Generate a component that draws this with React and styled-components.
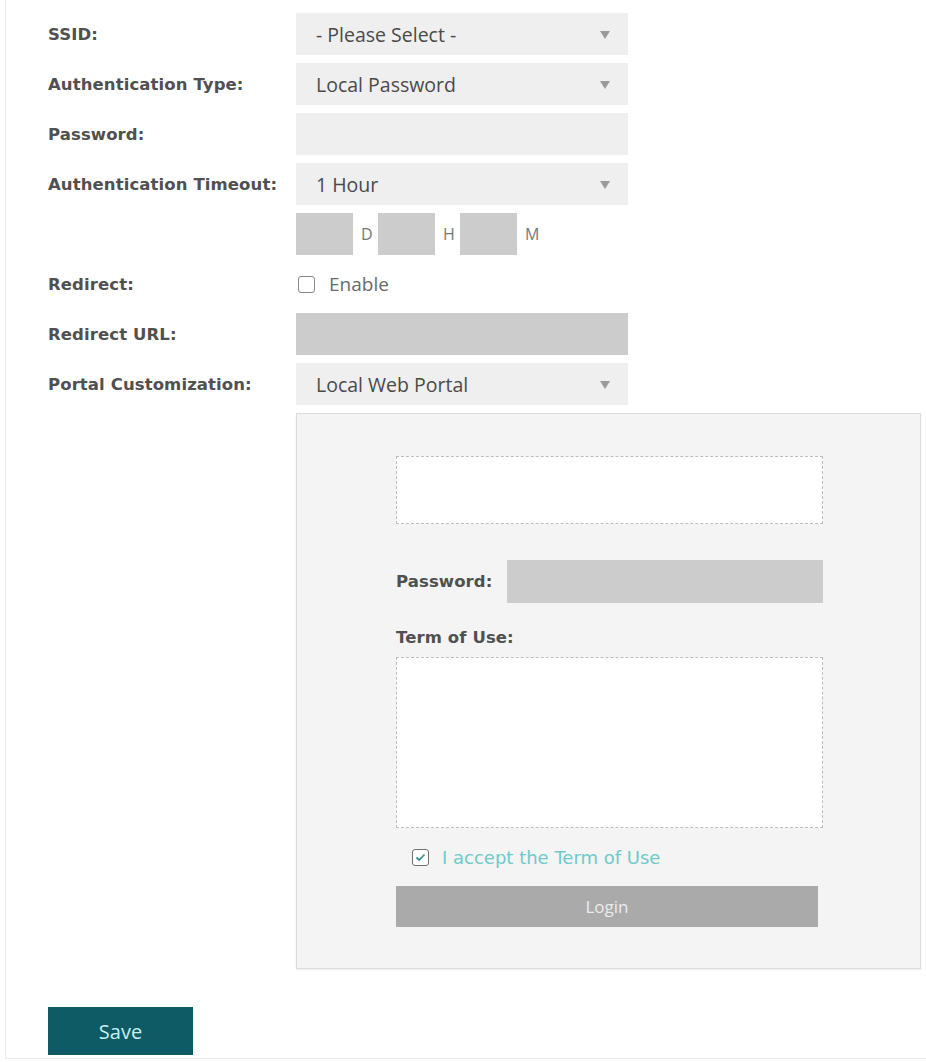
import React from "react";
import styled, { createGlobalStyle } from "styled-components";

const Global = createGlobalStyle`
  html, body { margin: 0; padding: 0; background: #ffffff; }
  body { font-family: "Open Sans", "Noto Sans", sans-serif; }
  * { box-sizing: border-box; }
`;

const Page = styled.div`
  margin-left: 5px;
  width: 921px;
  border-left: 1px solid #ececec;
  border-bottom: 1px solid #ececec;
  padding: 13px 0 3px 42px;
`;

const Form = styled.div`
  display: grid;
  grid-template-columns: 248px 1fr;
  row-gap: 8px;
  align-items: center;
`;

const Label = styled.div`
  font-family: "DejaVu Sans", Verdana, sans-serif;
  font-weight: bold;
  font-size: 16.5px;
  letter-spacing: 0.1px;
  color: #505050;
  white-space: nowrap;
`;

const Field = styled.div`
  width: ${(p) => p.$w || 332}px;
  height: ${(p) => p.$h || 42}px;
  background: ${(p) => (p.$disabled ? "#cccccc" : "#efefef")};
  display: flex;
  align-items: center;
  justify-content: space-between;
  padding: 0 18px 0 20px;
  font-family: "Open Sans", "Noto Sans", sans-serif;
  font-size: 19.5px;
  color: #4a4a4a;
`;

const Arrow = styled.span`
  width: 0;
  height: 0;
  border-left: 5px solid transparent;
  border-right: 5px solid transparent;
  border-top: 8px solid #9a9a9a;
  margin-top: 2px;
`;

const TimeRow = styled.div`
  display: flex;
  align-items: center;
  height: 42px;
`;

const TimeBox = styled.div`
  width: 57px;
  height: 42px;
  background: #cccccc;
`;

const Unit = styled.span`
  width: 25px;
  padding-left: 8px;
  font-family: "Open Sans", sans-serif;
  font-size: 16px;
  color: #777777;
`;

const CheckRow = styled.label`
  display: flex;
  align-items: center;
  height: 42px;
  gap: 14px;
  padding-left: ${(p) => p.$indent || 2}px;
  font-family: "Open Sans", sans-serif;
  font-size: 19px;
  color: #6a6a6a;
`;

const Box = styled.span`
  width: 17px;
  height: 17px;
  border: 1.5px solid ${(p) => (p.$checked ? "#6f6f6f" : "#8a8a8a")};
  border-radius: 3px;
  background: #ffffff;
  display: flex;
  align-items: center;
  justify-content: center;
`;

const Empty = styled.div``;

const Panel = styled.div`
  grid-column: 2;
  width: 625px;
  height: 556px;
  background: #f4f4f4;
  border: 1px solid #dcdcdc;
  box-shadow: 0 1px 2px rgba(0, 0, 0, 0.08);
  padding: 42px 0 0 99px;
  display: flex;
  flex-direction: column;
`;

const Dashed = styled.div`
  width: 427px;
  height: ${(p) => p.$h}px;
  background: #ffffff;
  border: 1.5px dashed #bdbdbd;
`;

const PwRow = styled.div`
  display: flex;
  align-items: center;
  justify-content: space-between;
  width: 427px;
  margin-top: 36px;
`;

const PwInput = styled.div`
  width: 316px;
  height: 43px;
  background: #cccccc;
`;

const TermLabel = styled(Label)`
  margin-top: 24px;
  margin-bottom: 8px;
  line-height: 22px;
`;

const Accept = styled.label`
  display: flex;
  align-items: center;
  gap: 13px;
  margin: 19px 0 0 16px;
  height: 20px;
  font-family: "DejaVu Sans", Verdana, sans-serif;
  font-size: 18px;
  color: #6fcaca;
`;

const LoginButton = styled.div`
  width: 422px;
  height: 41px;
  margin-top: 19px;
  background: #aaaaaa;
  display: flex;
  align-items: center;
  justify-content: center;
  font-family: "Open Sans", sans-serif;
  font-size: 17px;
  color: #ececec;
`;

const SaveButton = styled.button`
  margin-top: 38px;
  width: 145px;
  height: 48px;
  border: none;
  background: #0e5b66;
  color: #c9eef0;
  font-family: "Open Sans", sans-serif;
  font-size: 20px;
  display: block;
  padding: 0;
`;

function Select({ value }) {
  return (
    <Field>
      <span>{value}</span>
      <Arrow />
    </Field>
  );
}

export default function App() {
  return (
    <>
      <Global />
      <Page>
        <Form>
          <Label>SSID:</Label>
          <Select value="- Please Select -" />

          <Label>Authentication Type:</Label>
          <Select value="Local Password" />

          <Label>Password:</Label>
          <Field />

          <Label>Authentication Timeout:</Label>
          <Select value="1 Hour" />

          <Empty />
          <TimeRow>
            <TimeBox />
            <Unit>D</Unit>
            <TimeBox />
            <Unit>H</Unit>
            <TimeBox />
            <Unit>M</Unit>
          </TimeRow>

          <Label>Redirect:</Label>
          <CheckRow>
            <Box />
            Enable
          </CheckRow>

          <Label>Redirect URL:</Label>
          <Field $disabled />

          <Label>Portal Customization:</Label>
          <Select value="Local Web Portal" />

          <Panel>
            <Dashed $h={68} />
            <PwRow>
              <Label>Password:</Label>
              <PwInput />
            </PwRow>
            <TermLabel>Term of Use:</TermLabel>
            <Dashed $h={171} />
            <Accept>
              <Box $checked>
                <svg width="11" height="9" viewBox="0 0 11 9">
                  <path d="M1.5 4.5 L4.2 7 L9.5 1.5" fill="none" stroke="#3d8f95" strokeWidth="1.8" />
                </svg>
              </Box>
              I accept the Term of Use
            </Accept>
            <LoginButton>Login</LoginButton>
          </Panel>
        </Form>
        <SaveButton>Save</SaveButton>
      </Page>
    </>
  );
}
